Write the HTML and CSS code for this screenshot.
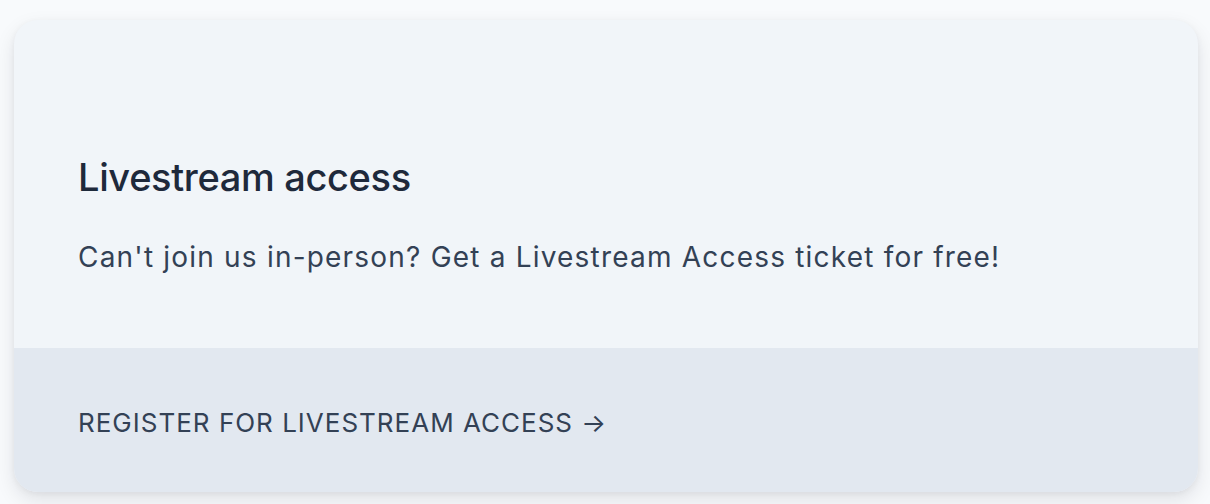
FILE: index.html
```html
<!DOCTYPE html>
<html>
<head>
<meta charset="utf-8">
<link rel="stylesheet" href="styles.css">
</head>
<body>
<div class="page">
  <div class="card">
    <div class="card-body">
      <h2 class="title">Livestream access</h2>
      <p class="desc">Can't join us in-person? Get a Livestream Access ticket for free!</p>
    </div>
    <div class="card-footer">
      <a class="cta" href="#">REGISTER FOR LIVESTREAM ACCESS <span class="arrow">→</span></a>
    </div>
  </div>
</div>
</body>
</html>
```
FILE: styles.css
```css
html, body {
  margin: 0;
  padding: 0;
}
body {
  background: #f8fafc;
  font-family: Inter, "Noto Sans", sans-serif;
  width: 1210px;
  height: 504px;
  overflow: hidden;
}
.page {
  padding: 20px 12px 12px 14px;
}
.card {
  width: 1184px;
  border-radius: 24px;
  overflow: hidden;
  background: #f1f5f9;
  box-shadow: 0 8px 20px rgba(15, 23, 42, 0.10), 0 2px 6px rgba(15, 23, 42, 0.05);
}
.card-body {
  padding: 130px 64px 70px 64px;
}
.title {
  margin: 0;
  font-size: 38px;
  line-height: 54px;
  font-weight: 500;
  letter-spacing: -0.35px;
  color: #1e293b;
}
.desc {
  margin: 32px 0 0 0;
  font-size: 28px;
  line-height: 42px;
  font-weight: 400;
  letter-spacing: 1.2px;
  color: #334155;
}
.card-footer {
  background: #e2e8f0;
  padding: 55px 64px 50px 64px;
}
.cta {
  display: block;
  font-size: 26px;
  line-height: 39px;
  letter-spacing: 1px;
  color: #334155;
  text-decoration: none;
  font-weight: 400;
}
```
